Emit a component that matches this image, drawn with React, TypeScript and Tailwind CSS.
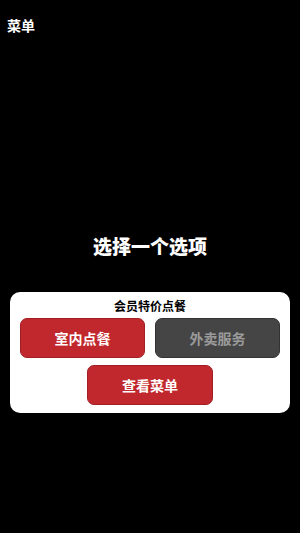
const FONT = { fontFamily: '"Noto Sans CJK SC", "Noto Sans", sans-serif' }

export default function App() {
  return (
    <div className="h-[533px] w-full bg-black flex flex-col overflow-hidden" style={FONT}>
      <div className="px-[7px] pt-[15px] text-[14px] leading-[20px] font-bold text-white">菜单</div>

      <h1 className="mt-[199px] text-center text-[19px] leading-[24px] font-black text-white">选择一个选项</h1>

      <div className="mx-2.5 mt-[34px] rounded-[10px] bg-white px-2.5 pt-[6px] pb-2">
        <p className="text-center text-[12px] leading-[16px] font-bold text-black">会员特价点餐</p>
        <div className="mt-1 grid grid-cols-2 gap-2.5">
          <button className="h-10 rounded-[7px] border border-[#a11f24] bg-[#c1282d] text-[14px] font-bold text-white">
            室内点餐
          </button>
          <button className="h-10 rounded-[7px] border border-[#333333] bg-[#454545] text-[14px] font-bold text-[#9a9a9a]">
            外卖服务
          </button>
        </div>
        <div className="mt-[7px] flex justify-center">
          <button className="h-10 w-[126px] rounded-[7px] border border-[#a11f24] bg-[#c1282d] text-[14px] font-bold text-white">
            查看菜单
          </button>
        </div>
      </div>
    </div>
  )
}
